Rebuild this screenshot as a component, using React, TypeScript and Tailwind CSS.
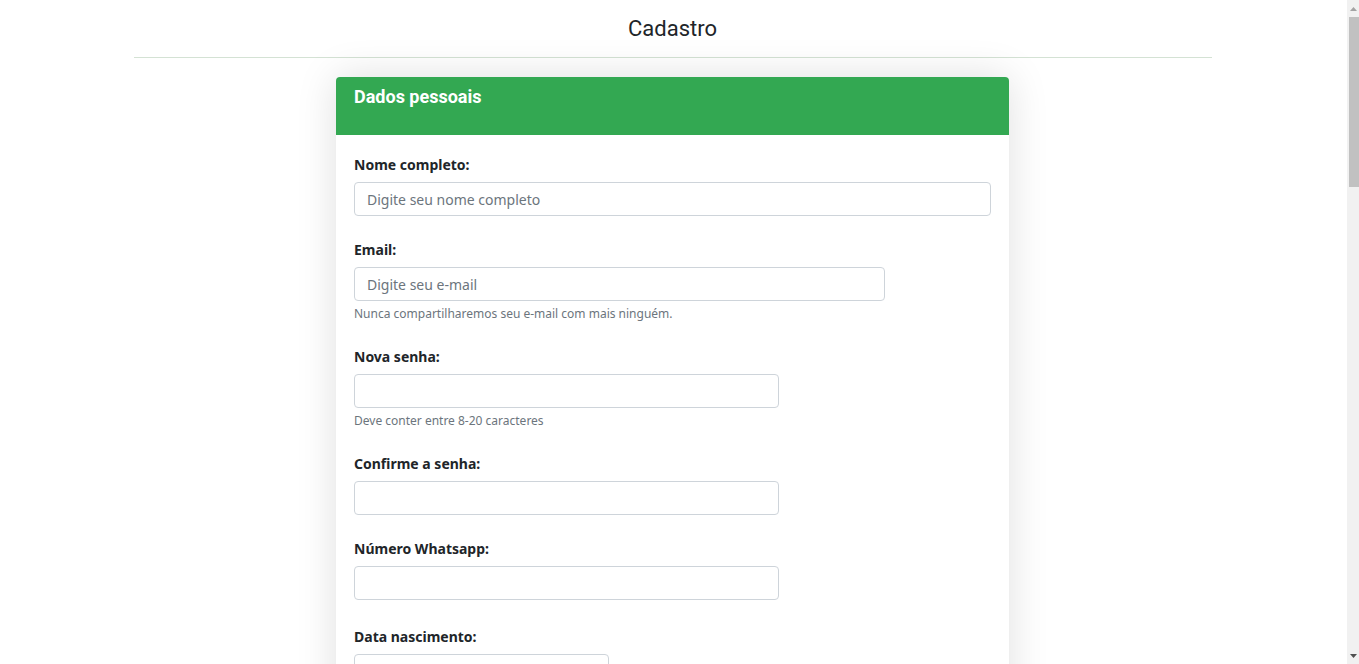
import React from 'react';

interface FieldProps {
  label: string;
  placeholder?: string;
  help?: string;
  width: string;
  type?: string;
}

function Field({ label, placeholder, help, width, type = 'text' }: FieldProps) {
  return (
    <div className="mb-[22px]">
      <label className="block pt-[2px] text-sm leading-5 font-bold text-[#212529] mb-[7px]">{label}</label>
      <input
        type={type}
        placeholder={placeholder}
        className={`${width} block h-[34px] rounded border border-[#ced4da] bg-white px-3 text-sm text-[#495057] placeholder:text-[#6c757d] outline-none`}
      />
      {help && <p className="mt-1 text-xs leading-[18px] text-[#6c757d]">{help}</p>}
    </div>
  );
}

export default function App() {
  return (
    <div className="flex h-[664px] overflow-hidden bg-white font-['Noto_Sans',sans-serif]">
      <div className="flex-1">
        {/* Header */}
        <div className="mx-auto w-[1078px] border-b border-[#d4e2d4] pt-[14px] pb-[13px] text-center">
          <h1 className="font-['Roboto',sans-serif] text-[22px] leading-[30px] text-[#212529]">Cadastro</h1>
        </div>

        {/* Card */}
        <div className="mx-auto mt-[19px] w-[673px] rounded bg-white shadow-[0_0_40px_rgba(0,0,0,0.13)]">
          <div className="h-[58px] rounded-t bg-[#33a852] px-[18px] pt-2">
            <h2 className="font-['Roboto',sans-serif] text-lg font-bold leading-6 text-white">Dados pessoais</h2>
          </div>
          <div className="px-[18px] pt-[18px] pb-6">
            <Field label="Nome completo:" placeholder="Digite seu nome completo" width="w-full" />
            <Field
              label="Email:"
              placeholder="Digite seu e-mail"
              width="w-[531px]"
              type="email"
              help="Nunca compartilharemos seu e-mail com mais ninguém."
            />
            <Field label="Nova senha:" width="w-[425px]" type="password" help="Deve conter entre 8-20 caracteres" />
            <Field label="Confirme a senha:" width="w-[425px]" type="password" />
            <Field label="Número Whatsapp:" width="w-[425px]" />
            <div className="pt-[3px]">
              <Field label="Data nascimento:" width="w-[255px]" type="date" />
            </div>
          </div>
        </div>
      </div>

      {/* Scrollbar */}
      <div className="w-[14px] pl-[2px]">
        <div className="flex h-full flex-col bg-[#f1f1f1]">
          <div className="flex h-[17px] items-center justify-center">
            <svg width="7" height="4" viewBox="0 0 7 4"><path d="M3.5 0L7 4H0z" fill="#a3a3a3" /></svg>
          </div>
          <div className="ml-[2px] h-[170px] w-[10px] bg-[#c1c1c1]" />
          <div className="flex-1" />
          <div className="flex h-[17px] items-center justify-center">
            <svg width="7" height="4" viewBox="0 0 7 4"><path d="M0 0H7L3.5 4z" fill="#505050" /></svg>
          </div>
        </div>
      </div>
    </div>
  );
}
